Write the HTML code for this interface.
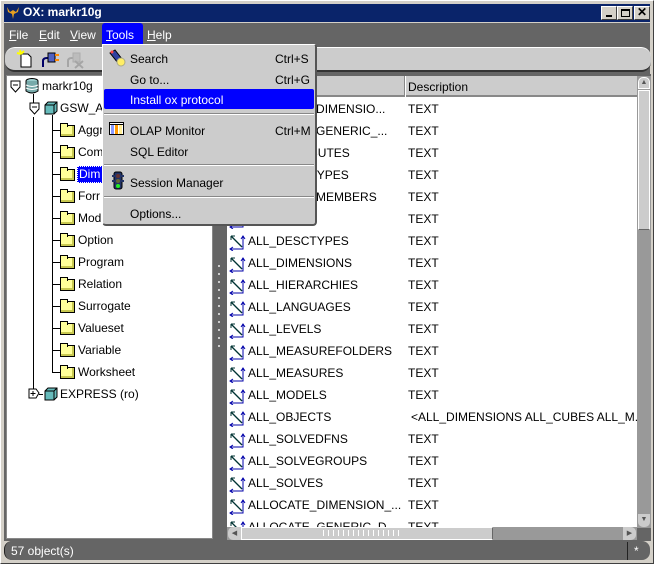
<!DOCTYPE html>
<html><head><meta charset="utf-8">
<style>
*{margin:0;padding:0;box-sizing:border-box}
body{width:654px;height:564px;background:#d4d0c8;position:relative;overflow:hidden;font-family:"Liberation Sans",sans-serif;font-size:12px;color:#000}
.a{position:absolute}
.t{position:absolute;white-space:nowrap;line-height:14px}
.fold{position:absolute;width:15px;height:12px;background:#ffff99;border:1px solid #000;box-shadow:inset -2px -2px 0 #c8c850}
.fold:before{content:"";position:absolute;left:-1px;top:-3px;width:6px;height:3px;background:#ffff99;border:1px solid #000;border-bottom:none}
.rel{position:absolute;width:16px;height:16px}
</style></head><body>
<!-- window frame -->
<div class="a" style="left:0;top:0;width:654px;height:564px;border:1px solid #fff;border-right-color:#404040;border-bottom-color:#404040"></div>
<!-- title -->
<div class="a" style="left:4px;top:4px;width:646px;height:18px;background:#0a246a"></div>
<svg class="a" style="left:6px;top:6px" width="14" height="14" viewBox="0 0 14 14"><path d="M1 1 L4 6 L7 4 L10 6 L13 1 L12 6 L8 8 L7 13 L6 8 L2 6 Z" fill="#e8a020"/></svg>
<div class="t" style="left:23px;top:5px;color:#fff;font-weight:bold;font-size:12px">OX: markr10g</div>
<div class="a" style="left:601px;top:6px;width:16px;height:14px;background:#d4d0c8;border:1px solid;border-color:#fff #404040 #404040 #fff"><div class="a" style="left:4px;top:8px;width:6px;height:2px;background:#000"></div></div>
<div class="a" style="left:617px;top:6px;width:16px;height:14px;background:#d4d0c8;border:1px solid;border-color:#fff #404040 #404040 #fff"><div class="a" style="left:3px;top:2px;width:9px;height:8px;border:1px solid #000;border-top-width:2px"></div></div>
<div class="a" style="left:634px;top:6px;width:16px;height:14px;background:#d4d0c8;border:1px solid;border-color:#fff #404040 #404040 #fff;font-size:12px;font-weight:bold;line-height:11px;text-align:center">✕</div>
<!-- menubar -->
<div class="a" style="left:4px;top:23px;width:646px;height:22px;background:#656565"></div>
<div class="a" style="left:102px;top:23px;width:41px;height:22px;background:#0000ff;border-radius:3px 3px 0 0"></div>
<div class="t" style="left:9px;top:28px;color:#fff"><u>F</u>ile</div>
<div class="t" style="left:39px;top:28px;color:#fff"><u>E</u>dit</div>
<div class="t" style="left:70px;top:28px;color:#fff"><u>V</u>iew</div>
<div class="t" style="left:106px;top:28px;color:#fff"><u>T</u>ools</div>
<div class="t" style="left:147px;top:28px;color:#fff"><u>H</u>elp</div>
<!-- toolbar -->
<div class="a" style="left:4px;top:45px;width:646px;height:29px;background:#656565"></div>
<div class="a" style="left:5px;top:47px;width:646px;height:25px;background:#cccccc;border-radius:10px;border-top:1px solid #fff;border-bottom:2px solid #333"></div>
<svg class="a" style="left:16px;top:49px" width="18" height="20"><path d="M5 5 H12 L15 8 V18 H5 Z" fill="#fff" stroke="#000"/><path d="M4 1 L5 5 M1 4 L5 5 M8 2 L5 5" stroke="#ff0" stroke-width="2"/></svg>
<svg class="a" style="left:40px;top:49px" width="20" height="20"><path d="M3 18 V12 Q3 9 7 9 H10" stroke="#000066" stroke-width="2" fill="none"/><rect x="8" y="4" width="7" height="9" fill="#5060c0" stroke="#000"/><path d="M15 6 H19 M15 11 H19" stroke="#f80" stroke-width="2"/></svg>
<svg class="a" style="left:65px;top:49px" width="20" height="20" opacity=".45"><path d="M3 18 V12 Q3 9 7 9 H10" stroke="#777" stroke-width="2" fill="none"/><rect x="8" y="4" width="7" height="9" fill="#aaa" stroke="#888"/><path d="M10 12 L18 19 M18 12 L10 19" stroke="#777" stroke-width="2"/></svg>
<!-- left panel -->
<div class="a" style="left:4px;top:74px;width:210px;height:467px;background:#656565"></div>
<div class="a" style="left:6px;top:75px;width:207px;height:464px;background:#fff;border:1px solid #888"></div>
<!-- tree lines -->
<div class="a" style="left:33px;top:94px;width:1px;height:14px;background:#000"></div>
<div class="a" style="left:33px;top:117px;width:1px;height:275px;background:#000"></div>
<div class="a" style="left:52px;top:115px;width:1px;height:258px;background:#000"></div>
<svg class="a" style="left:10px;top:80px" width="12" height="14"><path d="M1 1 H10 V7 L5.5 12 L1 7 Z" fill="#fff" stroke="#000"/><path d="M3 5 H8" stroke="#000"/></svg>
<svg class="a" style="left:25px;top:78px" width="14" height="16"><ellipse cx="7" cy="3" rx="6" ry="2.5" fill="#9cc" stroke="#000"/><path d="M1 3 V13 Q7 17 13 13 V3" fill="#7aa" stroke="#000"/><path d="M1 7 Q7 10 13 7 M1 10 Q7 13 13 10" stroke="#fff" fill="none"/></svg>
<div class="t" style="left:42px;top:79px">markr10g</div>
<svg class="a" style="left:29px;top:102px" width="12" height="14"><path d="M1 1 H10 V7 L5.5 12 L1 7 Z" fill="#fff" stroke="#000"/><path d="M3 5 H8" stroke="#000"/></svg>
<svg class="a" style="left:44px;top:101px" width="14" height="14"><path d="M1 4 L4 1 H13 V10 L10 13 H1 Z" fill="#6bb" stroke="#000"/><path d="M1 4 H10 V13 M10 4 L13 1" stroke="#000" fill="none"/></svg>
<div class="t" style="left:60px;top:101px">GSW_A</div>
<div id="tree"></div>
<svg class="a" style="left:28px;top:388px" width="12" height="12"><path d="M1 1 H8 L11 5 L8 10 H1 Z" fill="#fff" stroke="#000"/><path d="M2.5 5.5 H7.5 M5 3 V8" stroke="#000"/></svg>
<div class="a" style="left:39px;top:394px;width:4px;height:1px;background:#000"></div>
<svg class="a" style="left:44px;top:387px" width="14" height="14"><path d="M1 4 L4 1 H13 V10 L10 13 H1 Z" fill="#6bb" stroke="#000"/><path d="M1 4 H10 V13 M10 4 L13 1" stroke="#000" fill="none"/></svg>
<div class="t" style="left:60px;top:387px">EXPRESS (ro)</div>
<!-- splitter -->
<div class="a" style="left:213px;top:74px;width:13px;height:467px;background:#656565"></div>
<div class="a" style="left:218px;top:265px;width:2px;height:82px;background:repeating-linear-gradient(#ccc 0 2px,transparent 2px 8px)"></div>
<!-- right table -->
<div class="a" style="left:226px;top:74px;width:425px;height:467px;background:#656565"></div>
<div class="a" style="left:227px;top:76px;width:410px;height:452px;background:#fff;overflow:hidden" id="tbl">
  <div class="a" style="left:0;top:0;width:410px;height:21px;background:#ccc;border-bottom:2px solid #888"></div>
  <div class="a" style="left:177px;top:0;width:2px;height:21px;border-left:1px solid #888;border-right:1px solid #fff"></div>
  <div class="t" style="left:181px;top:4px">Description</div>
</div>
<!-- vscroll -->
<div class="a" style="left:637px;top:76px;width:14px;height:452px;background:#999"></div>
<div class="a" style="left:638px;top:77px;width:12px;height:12px;background:#ccc;border-radius:5px 5px 0 0;border:1px solid #fff;font-size:7px;line-height:10px;text-align:center;color:#555">▲</div>
<div class="a" style="left:638px;top:90px;width:12px;height:140px;background:#ccc;border:1px solid #fff;border-bottom-color:#666"></div>
<div class="a" style="left:638px;top:514px;width:12px;height:13px;background:#ccc;border-radius:0 0 5px 5px;font-size:7px;line-height:12px;text-align:center;color:#555">▼</div>
<!-- hscroll -->
<div class="a" style="left:227px;top:527px;width:410px;height:13px;background:#999"></div>
<div class="a" style="left:228px;top:527px;width:13px;height:13px;background:#ccc;border-radius:5px 0 0 5px;font-size:7px;line-height:13px;text-align:center;color:#555">◀</div>
<div class="a" style="left:241px;top:527px;width:252px;height:13px;background:#ccc;border:1px solid #fff;border-right-color:#666"></div>
<div class="a" style="left:323px;top:530px;width:80px;height:6px;background:repeating-linear-gradient(90deg,#fff 0 1px,transparent 1px 5px)"></div>
<div class="a" style="left:623px;top:527px;width:13px;height:13px;background:#ccc;border-radius:0 5px 5px 0;font-size:7px;line-height:13px;text-align:center;color:#555">▶</div>
<!-- status -->
<div class="a" style="left:4px;top:541px;width:646px;height:19px;background:#656565;border-radius:8px;border-left:1px solid #222"></div>
<div class="a" style="left:627px;top:542px;width:1px;height:18px;background:#222"></div>
<div class="t" style="left:11px;top:544px;color:#fff">57 object(s)</div>
<div class="t" style="left:634px;top:544px;color:#fff">*</div>
<!-- menu -->
<div class="a" style="left:102px;top:44px;width:215px;height:182px;background:#ccc;border:1px solid #fff;border-right:2px solid #555;border-bottom:2px solid #555;border-radius:0 3px 4px 4px"></div>
<div class="a" style="left:104px;top:89px;width:210px;height:20px;background:#0000ff;border-radius:2px"></div>
<div class="a" style="left:104px;top:113px;width:210px;height:2px;border-top:1px solid #888;border-bottom:1px solid #fff"></div>
<div class="a" style="left:104px;top:164px;width:210px;height:2px;border-top:1px solid #888;border-bottom:1px solid #fff"></div>
<div class="a" style="left:104px;top:196px;width:210px;height:2px;border-top:1px solid #888;border-bottom:1px solid #fff"></div>
<svg class="a" style="left:108px;top:49px" width="18" height="18"><path d="M2 4 L7 1 L14 10 L10 14 Z" fill="#3040a0" stroke="#000"/><circle cx="13" cy="13" r="4" fill="#ffee66" stroke="#aa8"/><circle cx="4" cy="3" r="1.5" fill="#f44"/></svg>
<div class="t" style="left:130px;top:52px">Search</div><div class="t" style="left:275px;top:52px">Ctrl+S</div>
<div class="t" style="left:130px;top:73px">Go to...</div><div class="t" style="left:275px;top:73px">Ctrl+G</div>
<div class="t" style="left:130px;top:93px;color:#fff">Install ox protocol</div>
<svg class="a" style="left:109px;top:122px" width="16" height="14"><rect x="0.5" y="0.5" width="14" height="12" fill="#fff" stroke="#000"/><rect x="2" y="3" width="3" height="9" fill="#8899ff"/><rect x="6" y="3" width="3" height="9" fill="#ff9900"/><rect x="10" y="3" width="3" height="9" fill="#ffee99"/><path d="M1 2.5 H14" stroke="#000"/></svg>
<div class="t" style="left:130px;top:124px">OLAP Monitor</div><div class="t" style="left:275px;top:124px">Ctrl+M</div>
<div class="t" style="left:130px;top:145px">SQL Editor</div>
<svg class="a" style="left:111px;top:171px" width="14" height="20"><rect x="3" y="1" width="8" height="17" rx="2" fill="#223366" stroke="#000"/><rect x="1" y="4" width="12" height="2" fill="#223366"/><rect x="1" y="9" width="12" height="2" fill="#223366"/><circle cx="7" cy="5" r="2" fill="#633"/><circle cx="7" cy="10" r="2" fill="#663"/><circle cx="7" cy="15" r="2" fill="#2e2"/></svg>
<div class="t" style="left:130px;top:176px">Session Manager</div>
<div class="t" style="left:130px;top:207px">Options...</div>
<script>
var names=["Aggr","Com","Dim","Forr","Mod","Option","Program","Relation","Surrogate","Valueset","Variable","Worksheet"];
var h="";
for(var i=0;i<names.length;i++){var y=130+i*22;
h+='<div class="a" style="left:53px;top:'+y+'px;width:7px;height:1px;background:#000"></div>';
h+='<div class="fold" style="left:60px;top:'+(y-5)+'px"></div>';
if(i==2)h+='<div class="a" style="left:77px;top:'+(y-8)+'px;width:26px;height:17px;background:#0000ff;border:1px dotted #fff"></div><div class="t" style="left:79px;top:'+(y-7)+'px;color:#fff">Dim</div>';
else h+='<div class="t" style="left:78px;top:'+(y-7)+'px">'+names[i]+'</div>';}
document.getElementById('tree').outerHTML=h;
var rows=[["ALL_CUBE_DIMENSIO...","TEXT"],["ALL_CUBE_GENERIC_...","TEXT"],["ALL_ATTRIBUTES","TEXT"],["ALL_CUBETYPES","TEXT"],["ALL_CUBE_MEMBERS","TEXT"],["ALL_CUBES","TEXT"],["ALL_DESCTYPES","TEXT"],["ALL_DIMENSIONS","TEXT"],["ALL_HIERARCHIES","TEXT"],["ALL_LANGUAGES","TEXT"],["ALL_LEVELS","TEXT"],["ALL_MEASUREFOLDERS","TEXT"],["ALL_MEASURES","TEXT"],["ALL_MODELS","TEXT"],["ALL_OBJECTS","&lt;ALL_DIMENSIONS ALL_CUBES ALL_M..."],["ALL_SOLVEDFNS","TEXT"],["ALL_SOLVEGROUPS","TEXT"],["ALL_SOLVES","TEXT"],["ALLOCATE_DIMENSION_...","TEXT"],["ALLOCATE_GENERIC_D...","TEXT"]];
var t="";
for(var j=0;j<rows.length;j++){var y=23+j*22;
t+='<svg class="a" style="left:2px;top:'+(y+3)+'px" width="17" height="17"><path d="M2 2 L13 13" stroke="#033" stroke-width="1.3"/><path d="M2 2 L2 6 M2 2 L6 2" stroke="#033"/><path d="M14 2 V15 H1" stroke="#00a" fill="none"/><path d="M12 5 L14 2 L16 5 M4 13 L1 15 L4 17" stroke="#00a" fill="none"/></svg>';
t+='<div class="t" style="left:21px;top:'+(y+3)+'px">'+rows[j][0]+'</div>';
t+='<div class="t" style="left:'+(j==14?184:181)+'px;top:'+(y+3)+'px">'+rows[j][1]+'</div>';}
document.getElementById('tbl').insertAdjacentHTML('beforeend',t);
</script>
</body></html>
